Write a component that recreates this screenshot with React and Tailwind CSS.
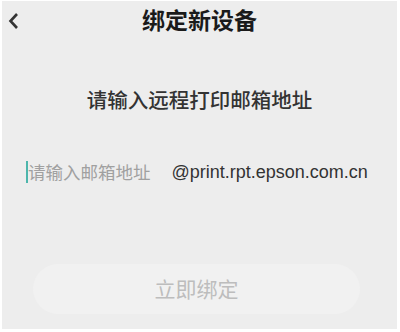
import React from "react";

const App = () => {
  return (
    <div
      className="w-[400px] h-[332px] bg-white pt-px pl-[2px] pr-[3px] pb-[3px]"
      style={{ fontFamily: '"Noto Sans CJK SC", "Liberation Sans", sans-serif' }}
    >
      <div className="w-full h-full bg-[#ededed] flex flex-col">
        <div className="relative h-[40px] flex items-center justify-center">
          <svg
            className="absolute left-[5px] top-[11px]"
            width="12"
            height="18"
            viewBox="0 0 12 18"
          >
            <path d="M10 2 L3.5 9 L10 16" fill="none" stroke="#333" strokeWidth="2.6" />
          </svg>
          <div className="text-[23px] font-bold text-[#1a1a1a] leading-none -mt-[3px]">绑定新设备</div>
        </div>
        <div className="mt-[48px] text-center text-[20.5px] font-medium text-[#333] leading-none">
          请输入远程打印邮箱地址
        </div>
        <div className="mt-[49px] flex items-center h-[26px] pl-[24px]">
          <div className="w-[2px] h-[22px] bg-[#4db6ac]" />
          <div className="text-[17.5px] text-[#a0a0a0] leading-none">请输入邮箱地址</div>
          <div
            className="ml-[21px] text-[18px] text-[#333] leading-none"
            style={{ fontFamily: '"Liberation Sans", sans-serif' }}
          >
            @print.rpt.epson.com.cn
          </div>
        </div>
        <div className="mt-[79px] ml-[31px] mr-[37px] h-[50px] rounded-full bg-[#f1f1f1] flex items-center justify-center">
          <div className="text-[21px] text-[#bdbdbd] leading-none">立即绑定</div>
        </div>
      </div>
    </div>
  );
};

export default App;
